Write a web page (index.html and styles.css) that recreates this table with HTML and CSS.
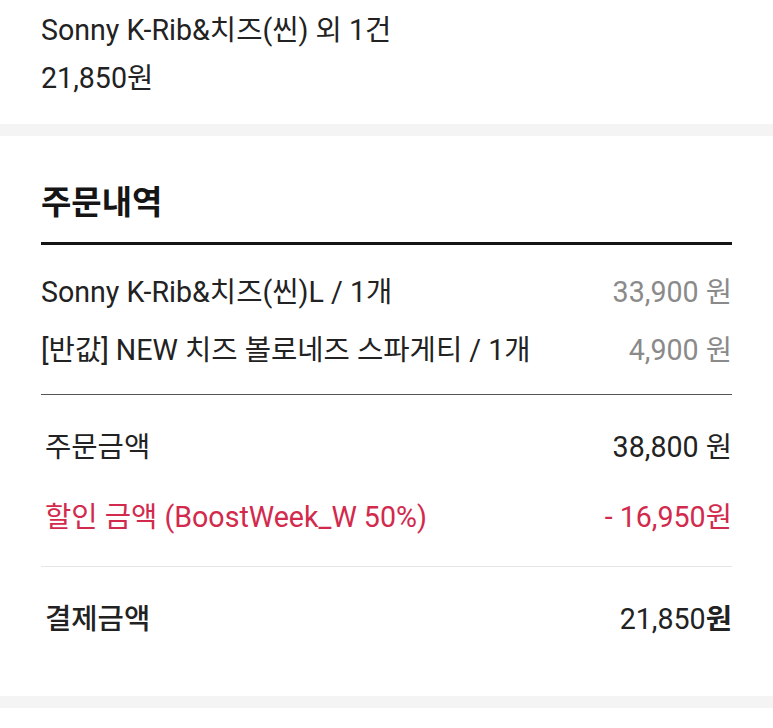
FILE: index.html
```html
<!DOCTYPE html>
<html lang="ko">
<head>
<meta charset="utf-8">
<link rel="stylesheet" href="styles.css">
</head>
<body>
<section class="summary-top">
  <div class="line">Sonny K-Rib&amp;치즈(씬) 외 1건</div>
  <div class="line">21,850원</div>
</section>
<div class="band"></div>
<section class="order">
  <h2 class="title">주문내역</h2>
  <div class="items">
    <div class="item"><span>Sonny K-Rib&amp;치즈(씬)L / 1개</span><span class="price">33,900 원</span></div>
    <div class="item"><span>[반값] NEW 치즈 볼로네즈 스파게티 / 1개</span><span class="price">4,900 원</span></div>
  </div>
  <div class="calc">
    <div class="row"><span>주문금액</span><span>38,800 원</span></div>
    <div class="row discount"><span>할인 금액 (BoostWeek_W 50%)</span><span>- 16,950원</span></div>
  </div>
  <div class="total">
    <div class="row"><span class="total-label">결제금액</span><span>21,850<b>원</b></span></div>
  </div>
</section>
<div class="band"></div>
</body>
</html>
```
FILE: styles.css
```css
* { box-sizing: border-box; margin: 0; padding: 0; }
body {
  margin: 0;
  background: #fff;
  font-family: Roboto, "Noto Sans CJK KR", sans-serif;
  color: #222;
  font-size: 28.6px;
}
.summary-top {
  padding: 6px 41px 22px;
}
.summary-top .line {
  line-height: 48px;
  height: 48px;
}
.band {
  height: 12px;
  background: #f4f4f4;
}
.order {
  padding: 47px 41px 45px;
}
.title {
  font-size: 33px;
  font-weight: 700;
  line-height: 40px;
  height: 40px;
  color: #151515;
  margin-bottom: 19px;
}
.items {
  border-top: 3px solid #151515;
  border-bottom: 1px solid #555;
  padding: 15px 0 18px;
}
.item {
  display: flex;
  justify-content: space-between;
  align-items: center;
  height: 58px;
  padding-right: 0;
}
.price { color: #8a8a8a; }
.calc {
  padding: 14px 0 17px 4px;
  border-bottom: 1px solid #e6e6e6;
}
.row {
  display: flex;
  justify-content: space-between;
  align-items: center;
  height: 70px;
}
.discount { color: #d22a4d; }
.total {
  padding: 14px 0 0 4px;
}
.total-label { font-weight: 500; }
.total b { font-weight: 700; }
```
